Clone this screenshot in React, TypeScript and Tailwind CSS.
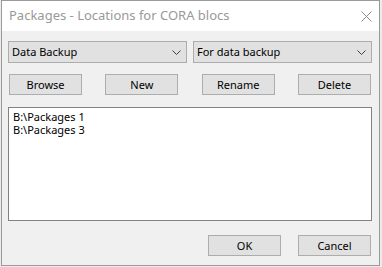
const font = "font-['Noto_Sans','Liberation_Sans',sans-serif]";

const WinButton = ({ label }: { label: string }) => (
  <button className="w-[73px] h-[21px] bg-[#e1e1e1] border border-[#adadad] text-[11px] leading-none text-black">
    {label}
  </button>
);

const Combo = ({ value }: { value: string }) => (
  <div className="w-[179px] h-[22px] bg-[#e1e1e1] border border-[#adadad] flex items-center justify-between pl-[3px] pr-[5px]">
    <span className="text-[11px] text-black">{value}</span>
    <svg width="9" height="5" viewBox="0 0 9 5" className="text-[#404040]">
      <path d="M0.5 0.5 L4.5 4.5 L8.5 0.5" fill="none" stroke="currentColor" strokeWidth="1" />
    </svg>
  </div>
);

export default function App() {
  return (
    <div className={`w-[382px] h-[267px] bg-[#ececec] pl-px ${font}`}>
      <div className="w-[379px] h-[266px] border border-[#9a9a9a] bg-[#f0f0f0] flex flex-col">
        <div className="h-[30px] bg-white flex items-center justify-between pl-[7px] pr-[7px]">
          <span className="text-[13px] text-[#999999]">Packages - Locations for CORA blocs</span>
          <svg width="11" height="11" viewBox="0 0 11 11" className="text-[#8a8a8a]">
            <path d="M0.5 0.5 L10.5 10.5 M10.5 0.5 L0.5 10.5" stroke="currentColor" strokeWidth="1" />
          </svg>
        </div>

        <div className="flex-1 px-[6px] pt-[10px]">
          <div className="flex gap-[6px]">
            <Combo value="Data Backup" />
            <Combo value="For data backup" />
          </div>

          <div className="flex justify-between pl-[1px] pr-[2px] mt-[11px]">
            <WinButton label="Browse" />
            <WinButton label="New" />
            <WinButton label="Rename" />
            <WinButton label="Delete" />
          </div>

          <div className="mt-[12px] w-[364px] h-[114px] bg-white border border-[#828282] pl-[4px] pt-[2px] text-[11px] leading-[13px] text-black">
            <div>B:\Packages 1</div>
            <div>B:\Packages 3</div>
          </div>

          <div className="flex justify-end gap-[17px] pr-[2px] mt-[14px]">
            <WinButton label="OK" />
            <WinButton label="Cancel" />
          </div>
        </div>
      </div>
    </div>
  );
}
